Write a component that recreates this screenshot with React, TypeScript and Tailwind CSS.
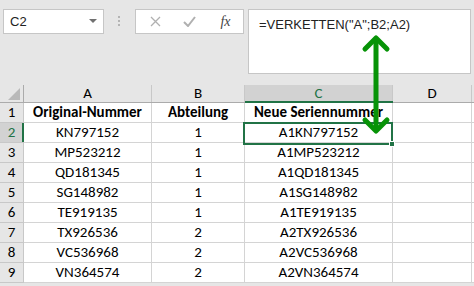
import React from "react";

const rows: [string, string, string, string][] = [
  ["1", "Original-Nummer", "Abteilung", "Neue Seriennummer"],
  ["2", "KN797152", "1", "A1KN797152"],
  ["3", "MP523212", "1", "A1MP523212"],
  ["4", "QD181345", "1", "A1QD181345"],
  ["5", "SG148982", "1", "A1SG148982"],
  ["6", "TE919135", "1", "A1TE919135"],
  ["7", "TX926536", "2", "A2TX926536"],
  ["8", "VC536968", "2", "A2VC536968"],
  ["9", "VN364574", "2", "A2VN364574"],
];

const font = { fontFamily: "Carlito, 'Liberation Sans', Arial, sans-serif" };

export default function App() {
  return (
    <div className="relative w-[474px] h-[286px] overflow-hidden bg-[#e6e6e6] text-[#000]" style={font}>
      {/* formula bar area */}
      <div className="flex items-start h-[85px] pt-[9px] pl-[3px]">
        <div className="w-[101px] h-[25px] bg-white border border-[#c6c6c6] flex items-center justify-between pl-[6px] pr-[6px] text-[13px] text-[#222]" style={{ fontFamily: "'Liberation Sans', Arial, sans-serif" }}>
          <span>C2</span>
          <svg width="8" height="5" viewBox="0 0 8 5"><path d="M0 0H8L4 4Z" fill="#707070" /></svg>
        </div>
        <div className="w-[31px] h-[25px] flex items-center justify-center">
          <svg width="3" height="11" viewBox="0 0 3 11">
            <rect x="0" y="0" width="2" height="2" fill="#b4b4b4" />
            <rect x="0" y="4" width="2" height="2" fill="#b4b4b4" />
            <rect x="0" y="8" width="2" height="2" fill="#b4b4b4" />
          </svg>
        </div>
        <div className="w-[109px] h-[25px] bg-white border border-[#c6c6c6] flex items-center">
          <div className="w-[34px] flex justify-center pl-[4px]">
            <svg width="11" height="11" viewBox="0 0 11 11"><path d="M1 1L10 10M10 1L1 10" stroke="#b0b0b0" strokeWidth="1.3" /></svg>
          </div>
          <div className="w-[38px] flex justify-center">
            <svg width="13" height="11" viewBox="0 0 13 11"><path d="M1 6L5 10L12 1" stroke="#b0b0b0" strokeWidth="2" fill="none" /></svg>
          </div>
          <div className="flex-1 flex justify-center text-[14px] italic text-[#444]" style={{ fontFamily: "'Liberation Serif', 'Times New Roman', serif" }}>
            fx
          </div>
        </div>
        <div className="ml-[4px] w-[223px] h-[65px] bg-white border border-[#c6c6c6] pl-[10px] pt-[5px] text-[13px] text-[#222]" style={{ fontFamily: "'Liberation Sans', Arial, sans-serif" }}>
          =VERKETTEN("A";B2;A2)
        </div>
      </div>

      {/* column header */}
      <div className="flex h-[18px] border-b border-[#ababab] text-[15px] leading-none">
        <div className="w-[24px] border-r border-[#ababab] flex items-end justify-end pr-[3px] pb-[2px]">
          <svg width="12" height="12" viewBox="0 0 12 12"><path d="M12 0V12H0Z" fill="#b9b9b9" /></svg>
        </div>
        <div className="w-[128px] border-r border-[#c8c8c8] flex items-center justify-center">A</div>
        <div className="w-[93px] border-r border-[#c8c8c8] flex items-center justify-center">B</div>
        <div className="w-[148px] border-r border-[#c8c8c8] bg-[#d2d2d2] flex items-center justify-center text-[#217346] relative">
          C
          <div className="absolute left-0 right-[-1px] bottom-[-1px] h-[2px] bg-[#217346]" />
        </div>
        <div className="w-[79px] border-r border-[#c8c8c8] flex items-center justify-center">D</div>
        <div className="flex-1" />
      </div>

      {/* rows */}
      {rows.map((r, i) => {
        const header = i === 0;
        const sel = i === 1;
        return (
          <div key={r[0]} className="flex h-[20px] text-[15px] leading-none">
            <div className={`w-[24px] border-b border-[#c8c8c8] flex items-center justify-center relative ${sel ? "text-[#217346] bg-[#d2d2d2]" : ""} border-r border-[#ababab]`}>
              {r[0]}
              {sel && <div className="absolute right-[-1px] top-0 bottom-0 w-[2px] bg-[#217346]" />}
            </div>
            <div className={`w-[128px] bg-white border-r border-b border-[#d4d4d4] flex items-center justify-center ${header ? "font-bold" : ""}`}>{r[1]}</div>
            <div className={`w-[93px] bg-white border-r border-b border-[#d4d4d4] flex items-center justify-center ${header ? "font-bold" : ""}`}>{r[2]}</div>
            <div className={`w-[148px] bg-white border-r border-b border-[#d4d4d4] flex items-center justify-center whitespace-nowrap overflow-visible relative z-0 ${header ? "font-bold" : ""}`}>{r[3]}</div>
            <div className="w-[79px] bg-white border-r border-b border-[#d4d4d4]" />
            <div className="flex-1 bg-white border-b border-[#d4d4d4]" />
          </div>
        );
      })}

      {/* selection box C2 */}
      <div className="absolute left-[243px] top-[122px] w-[150px] h-[23px] border-2 border-[#217346] pointer-events-none" />
      <div className="absolute left-[389px] top-[141px] w-[6px] h-[6px] bg-[#217346] border border-white" />

      {/* green double arrow */}
      <svg className="absolute left-0 top-0" width="474" height="286" viewBox="0 0 474 286">
        <g stroke="#079307" strokeWidth="5" fill="none" strokeLinecap="round" strokeLinejoin="round">
          <path d="M376 40V129" />
          <path d="M365 49L376 38L387 49" />
          <path d="M365 120L376 131L387 120" />
        </g>
      </svg>
    </div>
  );
}
